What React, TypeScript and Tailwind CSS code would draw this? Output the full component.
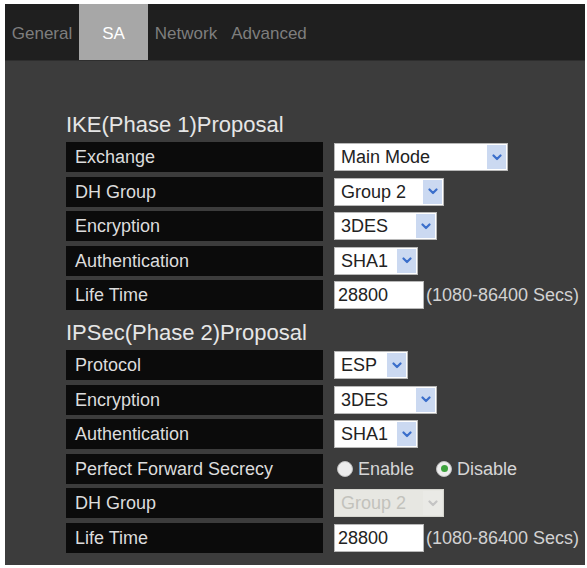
import React from 'react'

const font = { fontFamily: '"Liberation Sans", Arial, sans-serif' }

const tabs = ['General', 'SA', 'Network', 'Advanced']

// little blue chevron used by every dropdown
const Chevron = ({ disabled }: { disabled?: boolean }) => (
  <svg width="10" height="7" viewBox="0 0 10 7">
    <path
      d="M1.5 1.5 L5 5 L8.5 1.5"
      fill="none"
      stroke={disabled ? '#c4c4c4' : '#3b6fcb'}
      strokeWidth="2.2"
      strokeLinecap="round"
      strokeLinejoin="round"
    />
  </svg>
)

interface DropProps {
  value: string
  width: string
  disabled?: boolean
}

const Drop = ({ value, width, disabled }: DropProps) => (
  <div
    className={`${width} h-[28px] flex items-center justify-between border pl-[6px] pr-[1px] ${
      disabled ? 'bg-[#e7e7e2] border-[#d6d6d0] text-[#c2c2bc]' : 'bg-white border-[#b8b8b8] text-[#222]'
    }`}
  >
    <span className="text-[18px] leading-none">{value}</span>
    <div
      className={`w-[19px] h-[24px] flex items-center justify-center ${
        disabled ? 'bg-[#eaeae6]' : 'bg-[#cbd9f1]'
      }`}
    >
      <Chevron disabled={disabled} />
    </div>
  </div>
)

const LifeInput = () => (
  <div className="flex items-center">
    <div className="w-[90px] h-[28px] bg-white border border-[#b8b8b8] flex items-center pl-[3px] text-[18px] text-[#222] leading-none">
      28800
    </div>
    <span className="ml-[2px] text-[18px] text-[#d2d2d2] leading-none">(1080-86400 Secs)</span>
  </div>
)

const Radio = ({ label, checked }: { label: string; checked?: boolean }) => (
  <div className="flex items-center gap-[5px]">
    <div className="w-[16px] h-[16px] rounded-full bg-[#ececec] border border-[#bdbdbd] flex items-center justify-center">
      {checked && <div className="w-[7px] h-[7px] rounded-full bg-[#3da23d]" />}
    </div>
    <span className="text-[18px] text-[#d6d6d6] leading-none">{label}</span>
  </div>
)

const Row = ({ label, children }: { label: string; children: React.ReactNode }) => (
  <div className="flex items-center">
    <div className="w-[257px] h-[30px] bg-[#0b0b0b] flex items-center pl-[9px] text-[18px] text-[#dcdcdc] leading-none">
      {label}
    </div>
    <div className="ml-[11px]">{children}</div>
  </div>
)

const Heading = ({ text, className }: { text: string; className?: string }) => (
  <h2 className={`text-[22px] leading-[26px] text-[#e6e6e6] mb-[4px] ${className ?? ''}`}>{text}</h2>
)

export default function App() {
  return (
    <div className="w-[587px] h-[568px] bg-white pt-[4px] pl-[5px] pr-[2px] pb-[3px]" style={font}>
      <div className="w-full h-full flex flex-col bg-[#3c3c3c]">
        {/* tab bar */}
        <div className="h-[57px] bg-[#1f1f1f] flex border-b border-[#2e2e2e]">
          {tabs.map((t) => (
            <div
              key={t}
              className={`h-full flex items-center justify-center pt-[3px] text-[17px] ${
                t === 'SA'
                  ? 'w-[69px] bg-[#a7a7a7] text-white'
                  : t === 'General'
                  ? 'w-[74px] text-[#7e7e7e]'
                  : t === 'Network'
                  ? 'w-[76px] text-[#7e7e7e]'
                  : 'w-[90px] text-[#7e7e7e]'
              }`}
            >
              {t}
            </div>
          ))}
        </div>

        <div className="pl-[61px] pt-[51px]">
          <Heading text="IKE(Phase 1)Proposal" />
          <div className="flex flex-col gap-[4.5px]">
            <Row label="Exchange">
              <Drop value="Main Mode" width="w-[174px]" />
            </Row>
            <Row label="DH Group">
              <Drop value="Group 2" width="w-[110px]" />
            </Row>
            <Row label="Encryption">
              <Drop value="3DES" width="w-[103px]" />
            </Row>
            <Row label="Authentication">
              <Drop value="SHA1" width="w-[84px]" />
            </Row>
            <Row label="Life Time">
              <LifeInput />
            </Row>
          </div>

          <Heading text="IPSec(Phase 2)Proposal" className="mt-[10px]" />
          <div className="flex flex-col gap-[4.5px]">
            <Row label="Protocol">
              <Drop value="ESP" width="w-[74px]" />
            </Row>
            <Row label="Encryption">
              <Drop value="3DES" width="w-[103px]" />
            </Row>
            <Row label="Authentication">
              <Drop value="SHA1" width="w-[84px]" />
            </Row>
            <Row label="Perfect Forward Secrecy">
              <div className="flex items-center gap-[22px] pl-[3px]">
                <Radio label="Enable" />
                <Radio label="Disable" checked />
              </div>
            </Row>
            <Row label="DH Group">
              <Drop value="Group 2" width="w-[110px]" disabled />
            </Row>
            <Row label="Life Time">
              <LifeInput />
            </Row>
          </div>
        </div>
      </div>
    </div>
  )
}
